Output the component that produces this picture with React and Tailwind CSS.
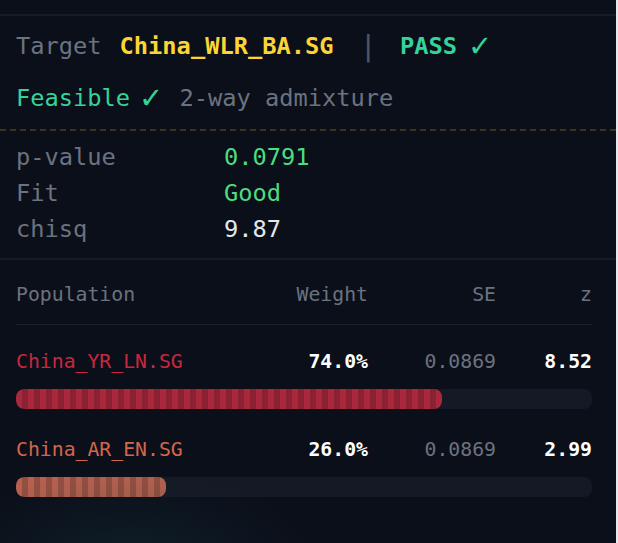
import React from "react";

const rows = [
  {
    name: "China_YR_LN.SG",
    color: "text-[#c8283f]",
    weight: "74.0%",
    pct: 74,
    se: "0.0869",
    z: "8.52",
    bar: "bg-[repeating-linear-gradient(90deg,#a9283c_0px,#a9283c_6px,#8a2233_6px,#8a2233_12px)]",
  },
  {
    name: "China_AR_EN.SG",
    color: "text-[#d5654e]",
    weight: "26.0%",
    pct: 26,
    se: "0.0869",
    z: "2.99",
    bar: "bg-[repeating-linear-gradient(90deg,#b6604e_0px,#b6604e_6px,#934f40_6px,#934f40_12px)]",
  },
];

const stats = [
  { label: "p-value", value: "0.0791", color: "text-[#4ade80]" },
  { label: "Fit", value: "Good", color: "text-[#4ade80]" },
  { label: "chisq", value: "9.87", color: "text-[#e5e7eb]" },
];

const Check = ({ className }) => (
  <span className={`font-['DejaVu_Sans',sans-serif] text-[29px] leading-none text-[#34d399] ${className}`}>✓</span>
);

const App = () => {
  return (
    <div className="min-h-screen bg-[#e5e7eb]">
      <div className="relative w-[616px] h-[543px] overflow-hidden bg-[#0b0f19] font-['DejaVu_Sans_Mono',monospace]">
        {/* faint glow at the bottom */}
        <div className="pointer-events-none absolute left-[-60px] top-[470px] w-[380px] h-[200px] rounded-full bg-[radial-gradient(closest-side,rgba(22,60,72,0.35),transparent)]" />

        <div className="h-[14px]" />
        <div className="h-[2px] bg-[#161b26]" />

        {/* target summary */}
        <div className="px-4 pt-3 pb-[13px] text-[23.7px] leading-[36px]">
          <div className="flex h-9 items-center whitespace-pre">
            <span className="text-[#6b7280]">Target</span>
            <span className="ml-[18px] font-bold text-[#fcd535]">China_WLR_BA.SG</span>
            <span className="ml-[26px] text-[29px] leading-none text-[#4b5563]">|</span>
            <span className="ml-[23px] font-bold text-[#34d399]">PASS</span>
            <Check className="ml-[11px]" />
          </div>
          <div className="mt-4 flex h-9 items-center whitespace-pre">
            <span className="text-[#34d399]">Feasible</span>
            <Check className="ml-[9px]" />
            <span className="ml-[16px] text-[#6b7280]">2-way admixture</span>
          </div>
        </div>
        <div className="border-t-2 border-dashed border-[#3a3320]" />

        {/* stats */}
        <div className="px-4 pt-2 pb-[11px] text-[23.7px] leading-[36px]">
          {stats.map((s) => (
            <div key={s.label} className="grid grid-cols-[208px_1fr]">
              <span className="text-[#6b7280]">{s.label}</span>
              <span className={s.color}>{s.value}</span>
            </div>
          ))}
        </div>
        <div className="h-[2px] bg-[#161b26]" />

        {/* populations table */}
        <div className="pl-4 pr-6 pt-5 text-[19.8px] leading-[30px]">
          <div className="grid grid-cols-[224px_128px_128px_96px] text-[#6b7280] pb-[14px] border-b border-[#1a202c]">
            <span>Population</span>
            <span className="text-right">Weight</span>
            <span className="text-right">SE</span>
            <span className="text-right">z</span>
          </div>

          <div className="pt-[22px] flex flex-col gap-[26px]">
            {rows.map((r) => (
              <div key={r.name}>
                <div className="grid grid-cols-[224px_128px_128px_96px]">
                  <span className={r.color}>{r.name}</span>
                  <span className="text-right font-bold text-white">{r.weight}</span>
                  <span className="text-right text-[#6b7280]">{r.se}</span>
                  <span className="text-right font-bold text-white">{r.z}</span>
                </div>
                <div className="mt-3 h-5 rounded-lg bg-[#141925] overflow-hidden">
                  <div className={`h-full rounded-lg ${r.bar}`} style={{ width: `${r.pct}%` }} />
                </div>
              </div>
            ))}
          </div>
        </div>
      </div>
    </div>
  );
};

export default App;
